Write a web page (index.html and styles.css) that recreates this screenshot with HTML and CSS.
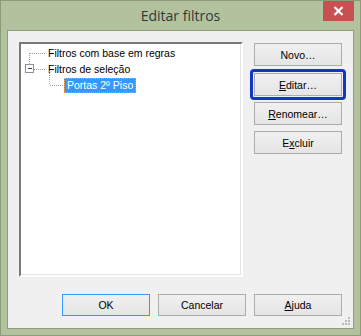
FILE: index.html
```html
<!DOCTYPE html>
<html lang="pt">
<head>
    <meta charset="UTF-8">
    <title>Editar filtros</title>
    <link rel="stylesheet" href="styles.css">
</head>
<body>

<div class="window">
    <div class="titlebar">
        <span class="title">Editar filtros</span>
        <button class="close" aria-label="Fechar">
            <svg width="11" height="10" viewBox="0 0 11 10"><path d="M1.5 1 L9.5 9 M9.5 1 L1.5 9" stroke="#fff" stroke-width="2.2"/></svg>
        </button>
    </div>

    <div class="client">
        <div class="main">
            <div class="tree">
                <div class="row">
                    <svg class="guide" width="24" height="16"><path d="M8.5 8 V16 M9 8.5 H24" /></svg>
                    <span class="label">Filtros com base em regras</span>
                </div>
                <div class="row">
                    <svg class="guide" width="24" height="16">
                        <path d="M8.5 0 V3" />
                        <path d="M13 8.5 H24" />
                        <rect class="box" x="4.5" y="3.5" width="8" height="8" />
                        <path class="minus" d="M6.5 7.5 H10.5" />
                    </svg>
                    <span class="label">Filtros de seleção</span>
                </div>
                <div class="row">
                    <svg class="guide" width="43" height="16"><path d="M28.5 -6 V8 M29 8.5 H43" /></svg>
                    <span class="label selected">Portas 2º Piso</span>
                </div>
            </div>

            <div class="side">
                <button class="btn">Novo…</button>
                <span class="focus-ring"><button class="btn"><u>E</u>ditar…</button></span>
                <button class="btn"><u>R</u>enomear…</button>
                <button class="btn">E<u>x</u>cluir</button>
            </div>
        </div>

        <div class="footer">
            <button class="btn default">OK</button>
            <button class="btn">Cancelar</button>
            <button class="btn"><u>A</u>juda</button>
        </div>

        <svg class="grip" width="9" height="9" viewBox="0 0 9 9">
            <rect x="6" y="0" width="2" height="2" />
            <rect x="3" y="3" width="2" height="2" />
            <rect x="6" y="3" width="2" height="2" />
            <rect x="0" y="6" width="2" height="2" />
            <rect x="3" y="6" width="2" height="2" />
            <rect x="6" y="6" width="2" height="2" />
        </svg>
    </div>
</div>

</body>
</html>
```

FILE: styles.css
```css
html, body {
    margin: 0;
    padding: 0;
}

body {
    width: 361px;
    height: 336px;
    overflow: hidden;
    font-family: "Liberation Sans", Arial, sans-serif;
    font-size: 10.5px;
    color: #000;
}

.window {
    box-sizing: border-box;
    width: 361px;
    height: 336px;
    background: #b2c29f;
    border: 1px solid #8c9c79;
    display: flex;
    flex-direction: column;
}

.titlebar {
    height: 29px;
    position: relative;
    display: flex;
    justify-content: center;
    align-items: center;
}

.title {
    font-family: "Open Sans", "Noto Sans", sans-serif;
    font-size: 14px;
    color: #2e3a36;
}

.close {
    position: absolute;
    top: 0;
    right: 6px;
    width: 31px;
    height: 20px;
    border: none;
    padding: 0;
    background: #c75050;
    display: flex;
    align-items: center;
    justify-content: center;
}

.client {
    flex: 1;
    position: relative;
    margin: 0 6px 6px 6px;
    border: 1px solid #8e9e7c;
    background: #f0f0f0;
    padding: 11px;
    display: flex;
    flex-direction: column;
}

.main {
    display: flex;
    gap: 11px;
}

.tree {
    box-sizing: border-box;
    width: 224px;
    height: 235px;
    background: #fff;
    border-style: solid;
    border-width: 2px;
    border-color: #7a7a7a #fff #fff #7a7a7a;
    box-shadow: inset -1px -1px 0 #e3e3e3;
    padding-top: 1px;
}

.row {
    display: flex;
    align-items: center;
    height: 16px;
}

.guide {
    flex: none;
    overflow: visible;
}

.guide path {
    fill: none;
    stroke: #a0a0a0;
    stroke-width: 1;
    stroke-dasharray: 1 1;
    shape-rendering: crispEdges;
}

.guide .box {
    fill: #fff;
    stroke: #919191;
    shape-rendering: crispEdges;
}

.guide .minus {
    stroke: #2c3e6a;
    stroke-dasharray: none;
}

.label {
    border: 1px solid transparent;
    padding: 0 2px;
    line-height: 13px;
    white-space: nowrap;
}

.label.selected {
    background: #3399ff;
    color: #fff;
    border: 1px dotted #f0a24a;
}

.side {
    display: flex;
    flex-direction: column;
    gap: 6px;
    padding-top: 1px;
}

.btn {
    box-sizing: border-box;
    width: 88px;
    height: 23px;
    border: 1px solid #acacac;
    background: linear-gradient(#f0f0f0, #e5e5e5);
    font-family: "Liberation Sans", Arial, sans-serif;
    font-size: 10.5px;
    color: #000;
    padding: 0;
}

.focus-ring {
    display: block;
    margin: -3px -4px -4px -4px;
    border: 3px solid #1237c8;
    border-radius: 4px;
    padding: 1px;
}

.focus-ring .btn {
    display: block;
}

.footer {
    margin-top: auto;
    display: flex;
    justify-content: flex-end;
    gap: 8px;
    padding-bottom: 1px;
}

.footer .btn {
    height: 22px;
}

.btn.default {
    border-color: #3399ff;
}

.grip {
    position: absolute;
    right: 2px;
    bottom: 2px;
}

.grip rect {
    fill: #b9b9b9;
}
```
